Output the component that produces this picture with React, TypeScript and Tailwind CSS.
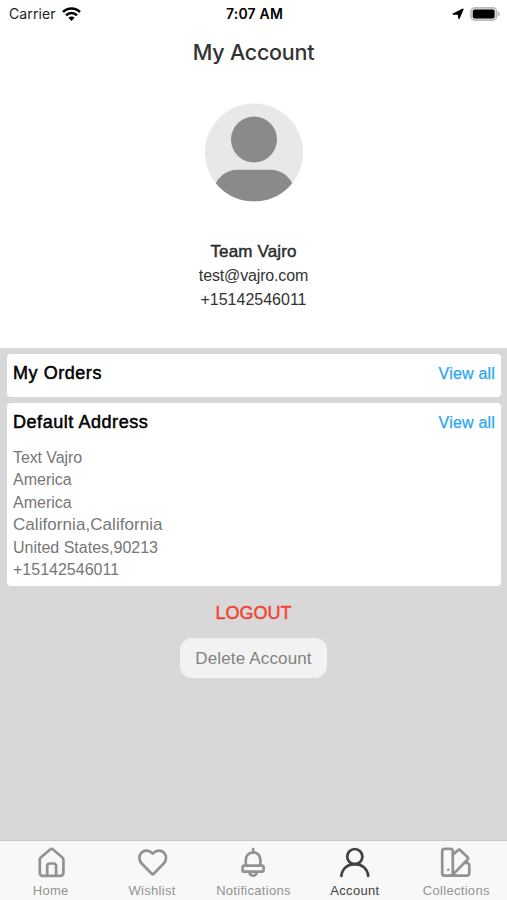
import type { ReactNode } from "react";

const address = [
  { text: "Text Vajro", style: "text-[16px] tracking-[-0.1px]" },
  { text: "America", style: "text-[16px]" },
  { text: "America", style: "text-[16px]" },
  { text: "California,California", style: "text-[17px] tracking-[0.06px]" },
  { text: "United States,90213", style: "text-[16px]" },
  { text: "+15142546011", style: "text-[16px]" },
];

function Wifi() {
  return (
    <svg width="19" height="14" viewBox="0 0 19 14" fill="none" stroke="#000" strokeWidth="2.5">
      <path d="M1 5a12 12 0 0 1 17 0" />
      <path d="M4 8.3a7.8 7.8 0 0 1 11 0" />
      <path d="M6.4 10.8a4.2 4.2 0 0 1 6.2 0L9.5 13.9z" fill="#000" stroke="none" />
    </svg>
  );
}

function StatusBar() {
  return (
    <div className="grid h-[27px] grid-cols-3 items-center pl-[9px] pr-[7px] font-['Inter',sans-serif] text-black">
      <div className="flex items-center gap-[6px]">
        <span className="text-[14px] leading-[27px] tracking-[0.1px] text-[#222]">Carrier</span>
        <Wifi />
      </div>
      <div className="whitespace-nowrap pt-px text-center text-[14px] font-semibold leading-[26px] tracking-[0.2px]">7:07 AM</div>
      <div className="flex items-center justify-end gap-[6px]">
        <svg width="12" height="12" viewBox="0 0 12 12">
          <path d="M11 1.2 7 10.4 6.2 6.2 1.2 6z" fill="#000" stroke="#000" strokeLinejoin="round" strokeWidth="1.3" />
        </svg>
        <svg width="30" height="14" viewBox="0 0 30 14">
          <rect x=".9" y=".8" width="25.8" height="12.4" rx="4" fill="#ddd" stroke="#b9b9b9" strokeWidth="1.5" />
          <rect x="2.8" y="2.5" width="21.8" height="9" rx="2" fill="#000" />
          <path d="M28 4.5c2.3.7 2.3 4.3 0 5z" fill="#b5b5b5" />
        </svg>
      </div>
    </div>
  );
}

function Avatar() {
  return (
    <svg width="98" height="99" viewBox="0 -0.5 98 99">
      <defs>
        <clipPath id="disc">
          <circle cx="49" cy="49" r="49" />
        </clipPath>
      </defs>
      <circle cx="49" cy="49" r="49" fill="#e8e8e8" />
      <g clipPath="url(#disc)" fill="#8a8a8a">
        <circle cx="49" cy="36" r="23" />
        <path d="M9 83C14 73 21 66.3 33 66.3H65C77 66.3 84 73 89 83V98H9z" />
      </g>
    </svg>
  );
}

function CardHeader({ children }: { children: ReactNode }) {
  return (
    <div className="flex items-start justify-between">
      <h2 className="text-[18px] leading-[24px] tracking-[0.55px] text-black [-webkit-text-stroke:0.5px_#000]">{children}</h2>
      <a className="pt-px text-[16px] leading-[24px] tracking-[0.2px] text-[#2ba6f0] [-webkit-text-stroke:0.25px_#2ba6f0]">View all</a>
    </div>
  );
}

function Tab({ label, active, children }: { label: string; active?: boolean; children: ReactNode }) {
  return (
    <div className={active ? "flex flex-col items-center text-[#414141]" : "flex flex-col items-center text-[#929292]"}>
      <svg
        width="32"
        height="32"
        viewBox="0 0 32 32"
        fill="none"
        stroke="currentColor"
        strokeWidth="2.7"
        strokeLinecap="round"
        strokeLinejoin="round"
      >
        {children}
      </svg>
      <span className="mt-[4px] whitespace-nowrap text-[13px] leading-[16px] tracking-[0.3px]">{label}</span>
    </div>
  );
}

export default function App() {
  return (
    <div className="flex h-[900px] w-[507px] flex-col overflow-hidden bg-[#d8d8d8] font-['Liberation_Sans',Arial,sans-serif]">
      <header className="flex h-[348px] flex-col bg-white">
        <StatusBar />
        <h1 className="mt-[11px] text-center font-['Inter',sans-serif] text-[21.5px] font-medium leading-[28px] tracking-[-0.25px] text-[#333]">
          My Account
        </h1>
        <div className="mt-[37px] flex flex-col items-center">
          <Avatar />
          <p className="mt-[38px] text-[17px] leading-[24px] tracking-[0.15px] text-[#2b2b2b] [-webkit-text-stroke:0.45px_#2b2b2b]">
            Team Vajro
          </p>
          <p className="text-[16px] leading-[24px] tracking-[-0.15px] text-[#333]">test@vajro.com</p>
          <p className="text-[16px] leading-[24px] text-[#333]">+15142546011</p>
        </div>
      </header>

      <main className="flex flex-1 flex-col items-center pl-[7px] pr-[6px] pt-[6px]">
        <section className="h-[43px] w-full rounded-[4px] bg-white pl-[6px] pr-[6px] pt-[7px]">
          <CardHeader>My Orders</CardHeader>
        </section>
        <section className="mt-[6px] h-[183px] w-full rounded-[4px] bg-white pl-[6px] pr-[6px] pt-[7px]">
          <CardHeader>Default Address</CardHeader>
          <div className="mt-[12px] flex flex-col leading-[22.4px] text-[#777]">
            {address.map((line, i) => (
              <span key={i} className={line.style}>
                {line.text}
              </span>
            ))}
          </div>
        </section>
        <button className="mr-px mt-[15px] text-[18px] leading-[24px] text-[#f34235] [-webkit-text-stroke:0.45px_#f34235]">LOGOUT</button>
        <button className="mr-px mt-[13px] h-[40px] w-[147px] rounded-[12px] bg-[#f2f2f2] pt-[2px] text-[17px] tracking-[0.15px] text-[#828282]">
          Delete Account
        </button>
      </main>

      <nav className="grid h-[60px] grid-cols-5 border-t border-[#c8c8c8] bg-[#f8f8f8] pt-[6px]">
        <Tab label="Home">
          <path d="M15.2 2.5a2.2 2.2 0 0 1 2.8 0L27.2 10.3a3 3 0 0 1 1.2 2.4V26a2.8 2.8 0 0 1-2.8 2.8H7.6A2.8 2.8 0 0 1 4.8 26V12.7A3 3 0 0 1 6 10.3z" />
          <path d="M12.2 28.5V19a2.5 2.5 0 0 1 2.5-2.5h3.9a2.5 2.5 0 0 1 2.5 2.5V28.5" />
        </Tab>
        <Tab label="Wishlist">
          <path d="M16.7 6.6C13.5 2.9 8.3 2.8 5.4 5.7c-2.9 3-2.6 7.8.3 10.8L16 27a1 1 0 0 0 1.4 0L27.7 16.5c2.9-3 3.2-7.8.3-10.8-2.9-2.9-8.1-2.8-11.3.9z" />
        </Tab>
        <Tab label="Notifications">
          <path d="M16.1 2V5M8.8 18.6V12.7a7.3 7.3 0 0 1 14.6 0V18.6M7.4 18.7H24.8a1.8 1.8 0 0 1 1.8 1.8V23.2a1.5 1.5 0 0 1-1.5 1.5H7.1a1.5 1.5 0 0 1-1.5-1.5V20.5a1.8 1.8 0 0 1 1.8-1.8zM12.4 25c.2 4.7 7.2 4.7 7.4 0" />
        </Tab>
        <Tab label="Account" active>
          <circle cx="15.8" cy="9.6" r="7.6" />
          <path d="M2.4 28.8C3.2 21.6 8.5 17.2 15.8 17.2S28.4 21.6 29.2 28.8" />
        </Tab>
        <Tab label="Collections">
          <rect x="2.2" y="1.9" width="10.6" height="26.8" rx="2.5" />
          <path d="M12.8 7.6 17.8 3.4a2 2 0 0 1 2.8.1L27.4 9.9a2 2 0 0 1 0 2.8L12.8 27.6M24 15.9h2.9a2.4 2.4 0 0 1 2.4 2.4v8a2.4 2.4 0 0 1-2.4 2.4H10" />
          <circle cx="8.3" cy="22.7" r="1.3" fill="currentColor" stroke="none" />
        </Tab>
      </nav>
    </div>
  );
}
